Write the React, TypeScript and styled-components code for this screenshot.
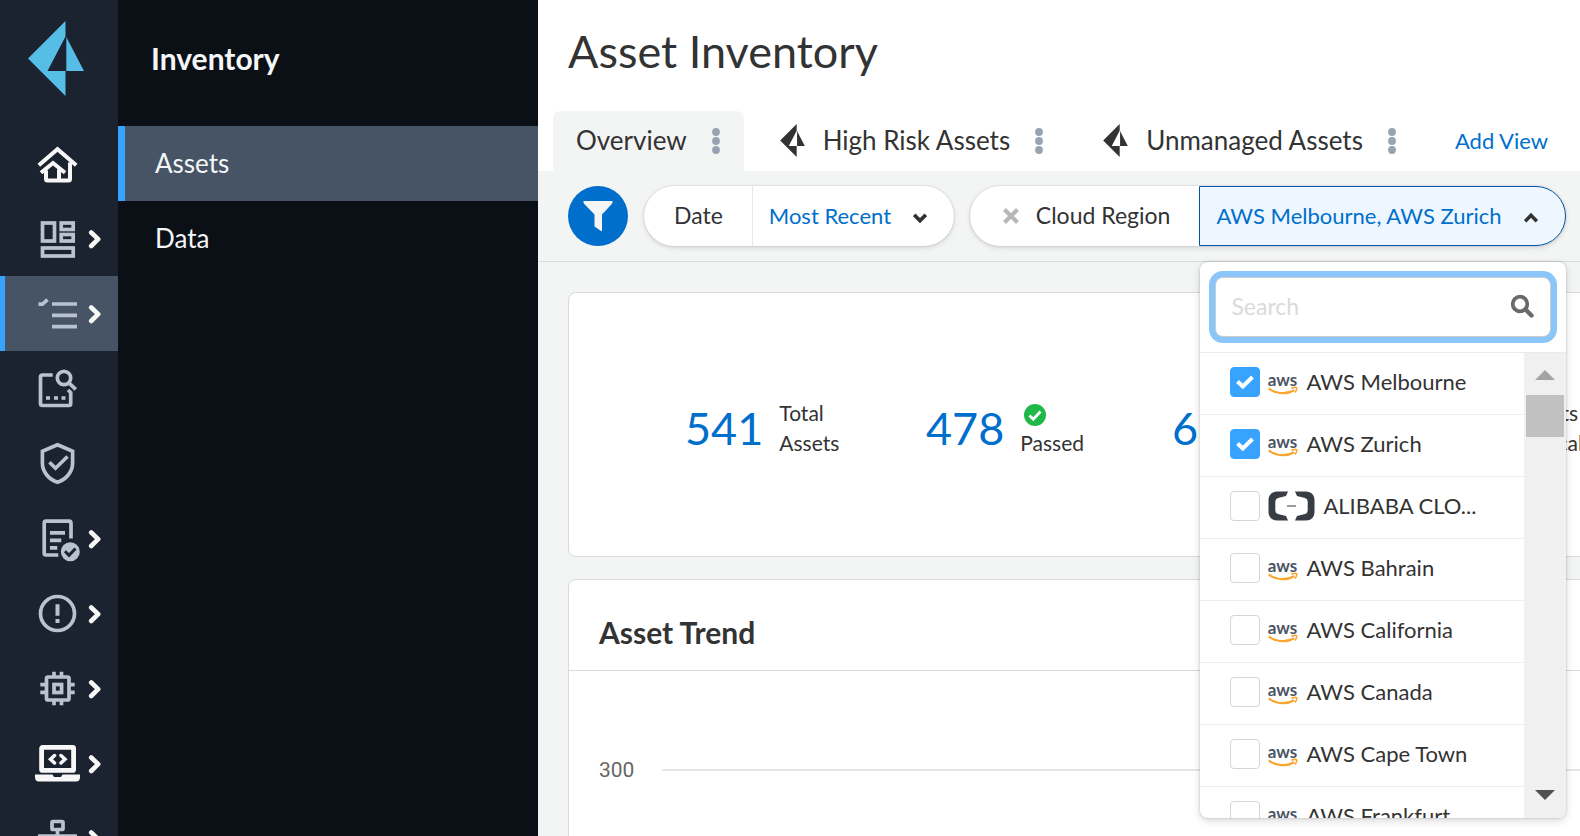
import React, { useState } from 'react';
import styled, { createGlobalStyle, css } from 'styled-components';

const color = {
  rail: '#1b2230',
  panel: '#0b1017',
  selected: '#475465',
  accent: '#38a3ff',
  railIcon: '#b9c2d0',
  link: '#006fcc',
  text: '#333333',
  page: '#f3f5f4',
  line: '#d9dbdb',
};

const GlobalStyle = createGlobalStyle`
  *, *::before, *::after { box-sizing: border-box; }
  body {
    margin: 0;
    overflow: hidden;
    background: ${color.page};
    color: ${color.text};
    font-family: Lato, "Open Sans", sans-serif;
    font-size: 22px;
    line-height: 30px;
  }
  button, input { font: inherit; color: inherit; }
  button { border: 0; padding: 0; background: none; cursor: pointer; }
  a { text-decoration: none; color: inherit; }
  svg { display: block; flex: none; }
`;

const Shell = styled.div`
  display: flex;
  height: 100vh;
  overflow: hidden;
`;

/* ---------- navigation ---------- */

const Rail = styled.nav`
  flex: none;
  width: 118px;
  background: ${color.rail};
`;

const RailLogo = styled.a`
  display: flex;
  height: 126px;
  padding: 21px 0 0 28px;
`;

const RailItem = styled.a<{ $selected?: boolean; $bright?: boolean }>`
  display: flex;
  align-items: center;
  gap: 6px;
  height: 75px;
  padding-left: 34px;
  color: ${(p) => (p.$bright ? '#f7f7f7' : color.railIcon)};
  ${(p) =>
    p.$selected &&
    css`
      background: ${color.selected};
      box-shadow: inset 5px 0 ${color.accent};
    `}
`;

const Panel = styled.nav`
  flex: none;
  width: 420px;
  background: ${color.panel};
  color: #f5f6f7;
`;

const PanelTitle = styled.h2`
  display: flex;
  align-items: center;
  height: 126px;
  margin: 0;
  padding: 0 33px 10px;
  font-size: 30px;
  font-weight: 700;
`;

const PanelLink = styled.a<{ $selected?: boolean }>`
  display: flex;
  align-items: center;
  height: 75px;
  padding: 0 0 2px 37px;
  font-size: 26px;
  ${(p) =>
    p.$selected &&
    css`
      background: ${color.selected};
      box-shadow: inset 7px 0 ${color.accent};
    `}
`;

/* ---------- header and tabs ---------- */

const Main = styled.main`
  flex: 1;
  min-width: 0;
  overflow: hidden;
`;

const Header = styled.header`
  display: flex;
  flex-direction: column;
  justify-content: space-between;
  height: 171px;
  background: #fff;
`;

const Title = styled.h1`
  margin: 0;
  padding: 21px 30px 0;
  font-size: 45px;
  font-weight: 400;
  line-height: 60px;
`;

const Tabs = styled.div`
  display: flex;
  align-items: center;
  gap: 13px;
  padding: 0 32px 0 15px;
`;

const Tab = styled.div<{ $selected?: boolean }>`
  display: flex;
  align-items: center;
  gap: 24px;
  height: 60px;
  padding: 0 23px;
  border-radius: 8px 8px 0 0;
  background: ${(p) => (p.$selected ? color.page : 'transparent')};
  font-size: 26px;
  white-space: nowrap;
`;

const TabButton = styled.button`
  display: flex;
  align-items: center;
  gap: 18px;
  padding-bottom: 2px;
`;

const AddView = styled.a`
  margin-left: auto;
  padding-bottom: 1px;
  color: ${color.link};
  white-space: nowrap;
`;

/* ---------- filters ---------- */

const FilterBar = styled.div`
  display: flex;
  gap: 16px;
  padding: 15px 0 15px 30px;
  border-bottom: 1px solid ${color.line};
`;

const FilterButton = styled.button`
  display: grid;
  place-items: center;
  flex: none;
  width: 60px;
  height: 60px;
  border-radius: 50%;
  background: ${color.link};
`;

const Pill = styled.div`
  position: relative;
  display: flex;
  flex: none;
  height: 60px;
  border-radius: 30px;
  background: #fff;
  box-shadow: 0 0 2px rgba(0, 0, 0, 0.2), 0 2px 5px rgba(0, 0, 0, 0.12);
`;

const PillLabel = styled.div`
  display: flex;
  align-items: center;
  gap: 17px;
  padding: 0 29px 2px 30px;
  font-size: 23px;
  white-space: nowrap;
`;

const RemoveButton = styled.button`
  padding: 2px 0 0 3px;
`;

const PillValue = styled.button<{ $open?: boolean }>`
  display: flex;
  align-items: center;
  justify-content: space-between;
  gap: 20px;
  min-width: 202px;
  padding: 0 27px 0 16px;
  border-left: 1px solid #e6e8e8;
  border-radius: 0 30px 30px 0;
  color: ${color.link};
  white-space: nowrap;
  ${(p) =>
    p.$open &&
    css`
      min-width: 367px;
      border: 1px solid #0054a6;
      background: #eef7ff;
    `}
`;

/* ---------- dropdown ---------- */

const Dropdown = styled.div`
  position: absolute;
  z-index: 2;
  top: calc(100% + 16px);
  right: 0;
  width: 366px;
  overflow: hidden;
  border-radius: 8px;
  background: #fff;
  box-shadow: 0 0 3px rgba(0, 0, 0, 0.18), 0 3px 8px rgba(0, 0, 0, 0.14);
`;

const SearchArea = styled.div`
  padding: 15px;
  border-bottom: 1px solid #e9eaea;
`;

const SearchBox = styled.label`
  display: flex;
  align-items: center;
  height: 60px;
  padding: 0 16px 2px 15px;
  border: 1px solid #ccc;
  border-radius: 8px;
  background: #fff;
  box-shadow: 0 0 0 6px #8ac6fa;
  font-size: 23px;
`;

const SearchInput = styled.input`
  flex: 1;
  min-width: 0;
  padding: 0;
  border: 0;
  outline: 0;
  background: none;
  &::placeholder { color: #d9dada; opacity: 1; }
`;

const ListFrame = styled.div`
  display: flex;
  height: 465px;
`;

const OptionList = styled.ul`
  flex: 1;
  min-width: 0;
  margin: 0;
  padding: 0;
  overflow: hidden;
  list-style: none;
`;

const Option = styled.label`
  display: flex;
  align-items: center;
  gap: 8px;
  height: 62px;
  padding: 0 0 3px 30px;
  border-bottom: 1px solid #ededed;
  white-space: nowrap;
`;

const CheckCell = styled.span`
  display: grid;
  place-items: center;
  width: 30px;
  height: 30px;
  & > * { grid-area: 1 / 1; }
  & > svg { pointer-events: none; }
`;

const Checkbox = styled.input`
  appearance: none;
  width: 30px;
  height: 30px;
  margin: 0;
  border: 1px solid #d5d5d5;
  border-radius: 4px;
  background: #fff;
  &:checked {
    border-color: ${color.accent};
    background: ${color.accent};
  }
`;

const ScrollTrack = styled.div`
  display: flex;
  flex-direction: column;
  align-items: center;
  flex: none;
  width: 42px;
  padding: 17px 0 18px;
  background: #f0f0f0;
`;

const ScrollThumb = styled.div`
  width: 38px;
  height: 42px;
  margin: 15px 0 auto;
  background: #c1c1c1;
`;

/* ---------- cards ---------- */

const Content = styled.div`
  display: flex;
  flex-direction: column;
  gap: 22px;
  min-width: 1120px;
  padding: 30px;
`;

const Card = styled.section`
  border: 1px solid ${color.line};
  border-radius: 8px;
  background: #fff;
`;

const Stats = styled.div`
  display: grid;
  grid-template-columns: 241px 246px 346px auto;
  align-items: center;
  height: 263px;
  padding: 7px 0 0 116px;
`;

const Stat = styled.div`
  display: flex;
  align-items: center;
  gap: 16px;
`;

const StatValue = styled.a`
  color: ${color.link};
  font-size: 45px;
  line-height: 60px;
`;

const StatLabel = styled.div`
  display: flex;
  flex-direction: column;
  font-size: 21px;
  line-height: 30px;
`;

const StatIcon = styled.span`
  display: flex;
  align-items: center;
  height: 30px;
  padding: 4px 0 0 4px;
`;

const CardTitle = styled.h2`
  display: flex;
  align-items: center;
  height: 91px;
  margin: 0;
  padding: 14px 30px 0;
  border-bottom: 1px solid ${color.line};
  font-size: 30px;
  font-weight: 700;
`;

const Chart = styled.div`
  height: 360px;
  padding: 84px 30px 0;
`;

const Gridline = styled.div`
  display: flex;
  align-items: center;
  gap: 28px;
  color: #666;
  font-family: Roboto, sans-serif;
  font-size: 21px;
  &::after {
    content: '';
    flex: 1;
    height: 2px;
    background: #e6e6e6;
  }
`;

/* ---------- icons ---------- */

const PrismLogo = ({ width, height, fill }: { width: number; height: number; fill: string }) => (
  <svg width={width} height={height} viewBox="0 0 56 75" fill={fill} aria-hidden="true">
    <path d="M37.5 0V15.5L19.5 50H37.5V75L0 37.5Z" />
    <path d="M38.3 16L56 50H38.3Z" />
  </svg>
);

const RailSvg = ({ children }: { children: React.ReactNode }) => (
  <svg width="48" height="49" viewBox="0 0 48 49" fill="none" stroke="currentColor" strokeWidth="3.7" aria-hidden="true">
    {children}
  </svg>
);

const ChevronRight = () => (
  <svg width="14" height="20" viewBox="0 0 14 20" fill="none" stroke="#f7f7f5" strokeWidth="4.6" strokeLinecap="round" strokeLinejoin="round" aria-hidden="true">
    <path d="M3.2 3.5L10.2 10.2L3.2 17" />
  </svg>
);

const Chevron = ({ up }: { up?: boolean }) => (
  <svg width="14" height="16" viewBox="0 0 14 16" fill="none" stroke="#333" strokeWidth="3.6" aria-hidden="true">
    <path d={up ? 'M1.2 13.3L7 7.3L12.8 13.3' : 'M1.2 6.8L7 12.6L12.8 6.8'} />
  </svg>
);

const Dots = () => (
  <svg width="10" height="28" viewBox="0 0 10 28" fill="#97a3b1" aria-hidden="true">
    <circle cx="5" cy="5" r="3.9" />
    <circle cx="5" cy="14" r="3.9" />
    <circle cx="5" cy="23" r="3.9" />
  </svg>
);

const AwsLogo = () => (
  <svg width="30" height="26" viewBox="0 0 30 26" aria-hidden="true">
    <text x="14.5" y="17" textAnchor="middle" fontFamily="Lato, sans-serif" fontSize="17" fontWeight="700" fill="#4b5564">
      aws
    </text>
    <path d="M0.800 19.400C8 25.200 19 25.600 26.200 21.300" fill="none" stroke="#f9a52e" strokeWidth="2.300" />
    <path d="M23.300 19.300C26 18.200 28.400 18.400 28.700 18.700C29 19.500 28.300 22.200 26.700 23.400" fill="none" stroke="#f9a52e" strokeWidth="1.500" />
  </svg>
);

const AlibabaLogo = () => (
  <svg width="47" height="30" viewBox="0 0 47 30" fill="#373d42" aria-hidden="true">
    <path d="M20 0.500H9C4 0.500 0.500 4 0.500 9V21C0.500 26 4 29.500 9 29.500H20L18 25L10 23Q7.300 22.200 7.300 19.500V10.500Q7.300 7.800 10 7L18 5Z" />
    <path d="M27 0.500H38C43 0.500 46.500 4 46.500 9V21C46.500 26 43 29.500 38 29.500H27L29 25L37 23Q39.700 22.200 39.700 19.500V10.500Q39.700 7.800 37 7L29 5Z" />
    <path d="M19 14.400H28V15.500H19Z" />
  </svg>
);

const CheckMark = () => (
  <svg width="20" height="16" viewBox="0 0 20 16" fill="none" stroke="#fff" strokeWidth="4" aria-hidden="true">
    <path d="M2.500 7.500L7.800 12.500L17.500 3" />
  </svg>
);

type RailEntry = { label: string; arrow?: boolean; selected?: boolean; bright?: boolean; icon: React.ReactNode };

const railEntries: RailEntry[] = [
  {
    label: 'Home',
    bright: true,
    icon: (
      <path strokeWidth="4" d="M4.800 26.200L23.500 10.200L42.200 26.200M36 23.500V40Q36 41.500 34.500 41.500H13.500Q12 41.500 12 40V31.500M7 33.700L19 24L31 33.700M25 30.500V41.500" />
    ),
  },
  {
    label: 'Dashboard',
    arrow: true,
    icon: (
      <>
        <rect x="8.500" y="9" width="12" height="18" />
        <rect x="27.200" y="9" width="12" height="6.500" />
        <rect x="27.200" y="20.500" width="12" height="6.500" />
        <rect x="8.500" y="34" width="30.700" height="8" />
      </>
    ),
  },
  {
    label: 'Inventory',
    arrow: true,
    selected: true,
    icon: <path d="M18 15H43M18 26.300H43M18 37.600H43M4.500 15.200H8.500L13.500 10.700" />,
  },
  {
    label: 'Investigate',
    icon: (
      <>
        <path d="M18.700 11H8.500Q6.500 11 6.500 13V39.500Q6.500 41.500 8.500 41.500H34.700Q36.700 41.500 36.700 39.500V28.500L34 26M12 34H16M20 34H24M27.500 34H31.500" />
        <circle cx="30" cy="14" r="6.700" />
        <path d="M34.800 18.800L41.800 25.300" />
      </>
    ),
  },
  {
    label: 'Policies',
    icon: <path d="M23.500 5.800L38.600 12.300V24C38.600 33 32 40.500 23.500 43.200C15 40.500 8.400 33 8.400 24V12.300ZM15.500 23.200L21.500 29.200L33.500 17.500" />,
  },
  {
    label: 'Compliance',
    arrow: true,
    icon: (
      <>
        <path d="M24.300 41H12Q10.200 41 10.200 39V9.200Q10.200 7.200 12 7.200H35Q37 7.200 37 9.200V24.500M16 18.800H31M16 26.300H27.300M16 33.800H23.300" />
        <circle cx="36.300" cy="37.700" r="9.500" fill="currentColor" stroke="none" />
        <path stroke={color.rail} strokeWidth="3" d="M31 37.300L35 41.300L41.500 34.500" />
      </>
    ),
  },
  {
    label: 'Alerts',
    arrow: true,
    icon: (
      <>
        <circle cx="23.500" cy="24.500" r="17" />
        <path strokeWidth="4" d="M23.500 15.300V26.700M23.500 30V34" />
      </>
    ),
  },
  {
    label: 'Compute',
    arrow: true,
    icon: (
      <>
        <rect x="12.500" y="13" width="22.500" height="23" rx="1.500" />
        <rect x="20" y="20.500" width="7.600" height="8" />
        <path d="M20 7.700V12M27.500 7.700V12M20 37V41.300M27.500 37V41.300M6.300 20.700H11M6.300 28.300H11M36 20.700H40.700M36 28.300H40.700" />
      </>
    ),
  },
  {
    label: 'Code Security',
    arrow: true,
    bright: true,
    icon: (
      <>
        <rect x="7.600" y="8.400" width="32" height="23" rx="1" strokeWidth="4.800" />
        <path fill="currentColor" stroke="none" d="M1 35.500H18.500L20 38H27L28.500 35.500H46V38Q46 42.500 42 42.500H5Q1 42.500 1 38Z" />
        <path strokeWidth="3.500" strokeLinecap="round" d="M20.500 16.500L16.500 20.200L20.500 24M27 16.500L31 20.200L27 24" />
      </>
    ),
  },
  {
    label: 'Network',
    arrow: true,
    icon: (
      <>
        <rect x="18" y="7.500" width="11" height="8" rx="1" />
        <path d="M23.500 16V22M4 22H43M6 22V32M41 22V32" />
      </>
    ),
  },
];

const initialOptions = [
  { name: 'AWS Melbourne', checked: true },
  { name: 'AWS Zurich', checked: true },
  { name: 'ALIBABA CLO...', checked: false, alibaba: true },
  { name: 'AWS Bahrain', checked: false },
  { name: 'AWS California', checked: false },
  { name: 'AWS Canada', checked: false },
  { name: 'AWS Cape Town', checked: false },
  { name: 'AWS Frankfurt', checked: false },
];

export default function App() {
  const [options, setOptions] = useState(initialOptions);
  const toggle = (name: string) =>
    setOptions((list) => list.map((o) => (o.name === name ? { ...o, checked: !o.checked } : o)));
  const selectedNames = options.filter((o) => o.checked).map((o) => o.name).join(', ');

  return (
    <>
      <GlobalStyle />
      <Shell>
        <Rail aria-label="Primary">
          <RailLogo href="#" aria-label="Start page">
            <PrismLogo width={56} height={75} fill="#55bde6" />
          </RailLogo>
          {railEntries.map((entry) => (
            <RailItem key={entry.label} href="#" aria-label={entry.label} $selected={entry.selected} $bright={entry.bright}>
              <RailSvg>{entry.icon}</RailSvg>
              {entry.arrow && <ChevronRight />}
            </RailItem>
          ))}
        </Rail>

        <Panel aria-label="Inventory">
          <PanelTitle>Inventory</PanelTitle>
          <PanelLink href="#" $selected>Assets</PanelLink>
          <PanelLink href="#">Data</PanelLink>
        </Panel>

        <Main>
          <Header>
            <Title>Asset Inventory</Title>
            <Tabs>
              <Tab $selected>
                <TabButton>Overview</TabButton>
                <button aria-label="Overview options"><Dots /></button>
              </Tab>
              <Tab>
                <TabButton>
                  <PrismLogo width={25} height={33} fill="#333" />
                  High Risk Assets
                </TabButton>
                <button aria-label="High Risk Assets options"><Dots /></button>
              </Tab>
              <Tab>
                <TabButton>
                  <PrismLogo width={25} height={33} fill="#333" />
                  Unmanaged Assets
                </TabButton>
                <button aria-label="Unmanaged Assets options"><Dots /></button>
              </Tab>
              <AddView href="#">Add View</AddView>
            </Tabs>
          </Header>

          <FilterBar>
            <FilterButton aria-label="Filters">
              <svg width="30" height="30" viewBox="0 0 30 30" fill="#f5f5f5" aria-hidden="true">
                <path d="M0.500 0H29.500Q30 2 28.500 3.200L19 13.500V29.500Q19 30 18 30L11.500 25.500V13.500L1.500 3.200Q0 2 0.500 0Z" />
              </svg>
            </FilterButton>
            <Pill>
              <PillLabel>Date</PillLabel>
              <PillValue>
                Most Recent
                <Chevron />
              </PillValue>
            </Pill>
            <Pill>
              <PillLabel>
                <RemoveButton aria-label="Remove Cloud Region filter">
                  <svg width="16" height="16" viewBox="0 0 16 16" stroke="#b8b8b8" strokeWidth="4.200" aria-hidden="true">
                    <path d="M1.500 1.500L14.500 14.500M14.500 1.500L1.500 14.500" />
                  </svg>
                </RemoveButton>
                Cloud Region
              </PillLabel>
              <PillValue $open aria-expanded="true">
                {selectedNames}
                <Chevron up />
              </PillValue>
              <Dropdown>
                <SearchArea>
                  <SearchBox>
                    <SearchInput type="text" placeholder="Search" aria-label="Search regions" />
                    <svg width="24" height="24" viewBox="0 0 24 24" fill="none" stroke="#6a6a6a" strokeWidth="3.800" aria-hidden="true">
                      <circle cx="10" cy="10" r="7.300" />
                      <path d="M15.500 15.500L21.500 21.500" strokeWidth="4.400" strokeLinecap="round" />
                    </svg>
                  </SearchBox>
                </SearchArea>
                <ListFrame>
                  <OptionList>
                    {options.map((o) => (
                      <li key={o.name}>
                        <Option>
                          <CheckCell>
                            <Checkbox type="checkbox" checked={o.checked} onChange={() => toggle(o.name)} />
                            {o.checked && <CheckMark />}
                          </CheckCell>
                          {o.alibaba ? <AlibabaLogo /> : <AwsLogo />}
                          {o.name}
                        </Option>
                      </li>
                    ))}
                  </OptionList>
                  <ScrollTrack aria-hidden="true">
                    <svg width="20" height="10" viewBox="0 0 20 10" fill="#a3a3a3"><path d="M0 10L10 0L20 10Z" /></svg>
                    <ScrollThumb />
                    <svg width="20" height="10" viewBox="0 0 20 10" fill="#505050"><path d="M0 0L10 10L20 0Z" /></svg>
                  </ScrollTrack>
                </ListFrame>
              </Dropdown>
            </Pill>
          </FilterBar>

          <Content>
            <Card>
              <Stats>
                <Stat>
                  <StatValue href="#">541</StatValue>
                  <StatLabel><span>Total</span><span>Assets</span></StatLabel>
                </Stat>
                <Stat>
                  <StatValue href="#">478</StatValue>
                  <StatLabel>
                    <StatIcon>
                      <svg width="22" height="22" viewBox="0 0 22 22" aria-hidden="true">
                        <circle cx="11" cy="11" r="11" fill="#21b84a" />
                        <path d="M5.500 11.500L9.300 15.200L16.500 7.500" fill="none" stroke="#fff" strokeWidth="2.800" />
                      </svg>
                    </StatIcon>
                    <span>Passed</span>
                  </StatLabel>
                </Stat>
                <Stat>
                  <StatValue href="#">63</StatValue>
                </Stat>
                <Stat>
                  <StatLabel><span>Assets</span><span>Critical</span></StatLabel>
                </Stat>
              </Stats>
            </Card>
            <Card>
              <CardTitle>Asset Trend</CardTitle>
              <Chart>
                <Gridline>300</Gridline>
              </Chart>
            </Card>
          </Content>
        </Main>
      </Shell>
    </>
  );
}
